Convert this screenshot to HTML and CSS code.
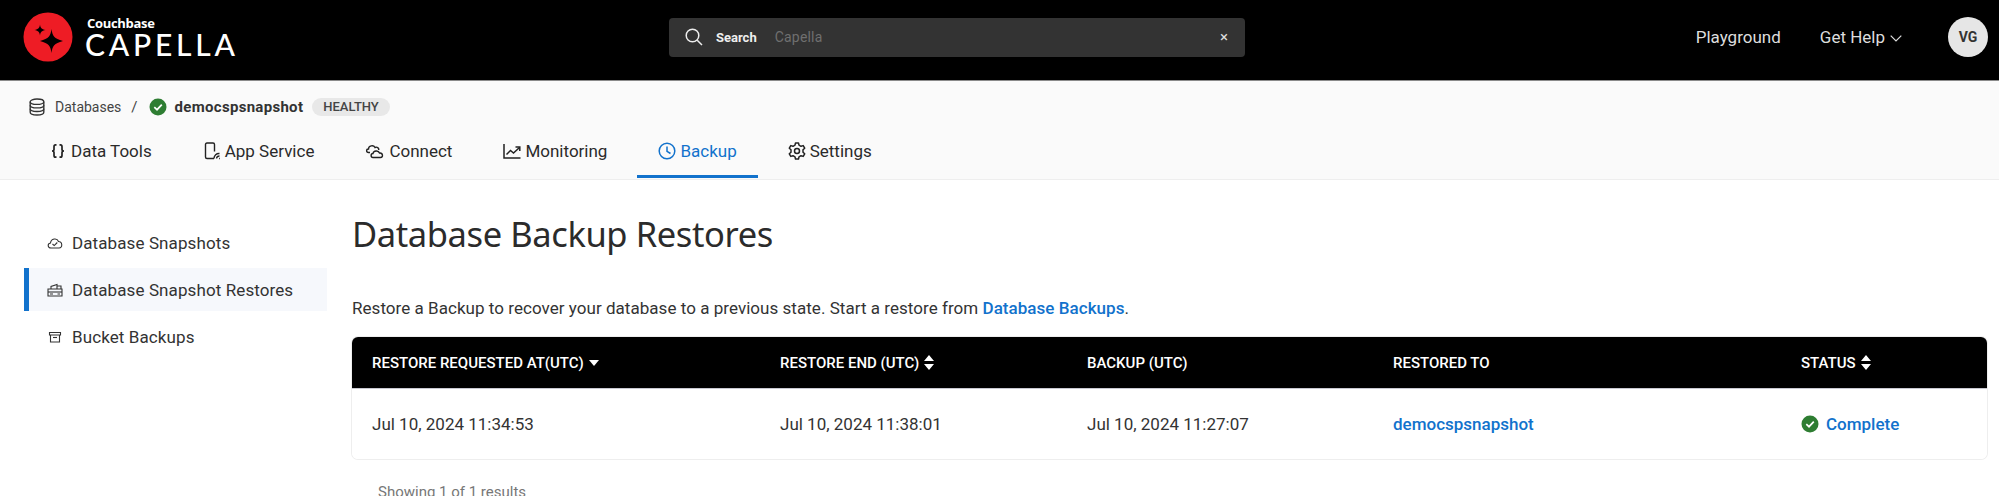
FILE: index.html
```html
<!DOCTYPE html>
<html lang="en">
<head>
<meta charset="utf-8">
<title>Database Backup Restores</title>
<link rel="stylesheet" href="styles.css">
</head>
<body>
<header class="topbar">
  <div class="brand">
    <svg class="brand-mark" viewBox="0 0 50 50" width="50" height="50">
      <circle cx="25" cy="25" r="24.5" fill="#ee1c25"/>
      <path d="M28.5 17 C29.5 24 31 26.5 40 29 C31 31.5 29.5 34 28.5 41 C27.5 34 26 31.5 17 29 C26 26.5 27.5 24 28.5 17Z" fill="#000"/>
      <path d="M17 12.5 C17.5 16 18.5 17.2 22.5 18 C18.5 18.8 17.5 20 17 23.5 C16.5 20 15.5 18.8 11.5 18 C15.5 17.2 16.5 16 17 12.5Z" fill="#000"/>
    </svg>
    <div class="brand-text">
      <span class="brand-small">Couchbase</span>
      <span class="brand-big">CAPELLA</span>
    </div>
  </div>
  <div class="search">
    <svg class="search-icon" viewBox="0 0 18 18" width="18" height="18" fill="none" stroke="#eee" stroke-width="1.5"><circle cx="7.5" cy="7.5" r="6.3"/><path d="M12.2 12.2 L17 17"/></svg>
    <span class="search-label">Search</span>
    <span class="search-scope">Capella</span>
    <span class="search-clear">×</span>
  </div>
  <nav class="topnav">
    <span class="topnav-item">Playground</span>
    <span class="topnav-item help">Get Help
      <svg viewBox="0 0 12 7" width="12" height="7" fill="none" stroke="#ddd" stroke-width="1.2"><path d="M.7.7 L6 6 L11.3.7"/></svg>
    </span>
    <span class="avatar">VG</span>
  </nav>
</header>

<section class="subheader">
  <div class="crumbs">
    <svg viewBox="0 0 16 18" width="16" height="18" fill="none" stroke="#333" stroke-width="1.4"><ellipse cx="8" cy="3.7" rx="6.8" ry="2.7"/><path d="M1.2 3.7 V14.3 C1.2 15.8 4.2 17 8 17 S14.8 15.8 14.8 14.3 V3.7"/><path d="M1.2 7.2 C1.2 8.7 4.2 9.9 8 9.9 S14.8 8.7 14.8 7.2"/><path d="M1.2 10.8 C1.2 12.3 4.2 13.5 8 13.5 S14.8 12.3 14.8 10.8"/></svg>
    <span class="crumb-link">Databases</span>
    <span class="crumb-sep">/</span>
    <svg class="check" viewBox="0 0 18 18" width="18" height="18"><circle cx="9" cy="9" r="8.5" fill="#2e7d32"/><path d="M5.3 9.2 L8 11.7 L12.8 6.6" fill="none" stroke="#fff" stroke-width="1.7"/></svg>
    <strong class="crumb-name">democspsnapshot</strong>
    <span class="badge">HEALTHY</span>
  </div>
  <nav class="tabs">
    <a class="tab"><svg viewBox="0 0 18 18" width="18" height="18" fill="none" stroke="#222" stroke-width="1.7"><path d="M7.500 2.800 H6.500 C5.300 2.800 5 3.600 5 4.800 V7.500 C5 8.500 4.300 9 3 9 C4.300 9 5 9.500 5 10.500 V13.200 C5 14.400 5.300 15.200 6.500 15.200 H7.500"/><path d="M10.500 2.800 H11.500 C12.700 2.800 13 3.600 13 4.800 V7.500 C13 8.500 13.700 9 15 9 C13.700 9 13 9.500 13 10.500 V13.200 C13 14.400 12.700 15.200 11.500 15.200 H10.500"/></svg>Data Tools</a>
    <a class="tab"><svg viewBox="0 0 18 18" width="18" height="18" fill="none" stroke="#222" stroke-width="1.4"><path d="M11 16.5 H4 C3 16.5 2.5 16 2.5 15 V2.5 C2.5 1.5 3 1 4 1 H10 C11 1 11.5 1.500 11.500 2.500 V9.500"/><path d="M11 16.500 A5 5 0 0 1 16.500 11.500 M13.500 16.500 A3 3 0 0 1 16.500 14 M16 16.500 H16.800"/></svg>App Service</a>
    <a class="tab"><svg viewBox="0 0 20 18" width="20" height="18" fill="none" stroke="#222" stroke-width="1.4"><path d="M5 10.500 H3.500 C1 10.500 1 7 3.500 7 C3.500 3.500 8.500 2.500 10 5.500 C12 4.500 14 6 13.800 8"/><path d="M8 15.500 C5.500 15.500 5.500 11.500 8 11.500 C8.500 8.500 13.500 8 14.500 11 C18 10.500 18.500 15.500 15.500 15.500 Z"/></svg>Connect</a>
    <a class="tab"><svg viewBox="0 0 18 18" width="18" height="18" fill="none" stroke="#222" stroke-width="1.5"><path d="M1 2 V16 H17.500"/><path d="M3.500 12.500 L7.500 8.500 L10.500 11 L16.500 5.500"/><path d="M12.500 5 H16.800 V9"/></svg>Monitoring</a>
    <a class="tab active"><svg viewBox="0 0 18 18" width="18" height="18" fill="none" stroke="#1272cc" stroke-width="1.5"><circle cx="9" cy="9" r="7.800"/><path d="M9 4.500 V9.300 L12.500 11.500"/></svg>Backup</a>
    <a class="tab"><svg viewBox="0 0 18 18" width="18" height="18" fill="none" stroke="#222" stroke-width="1.5"><path d="M7.500 1 H10.500 L11 3.200 L13 4.300 L15.200 3.600 L16.700 6.200 L15 7.800 V10.200 L16.700 11.800 L15.200 14.400 L13 13.700 L11 14.800 L10.500 17 H7.500 L7 14.800 L5 13.700 L2.800 14.400 L1.300 11.800 L3 10.200 V7.800 L1.300 6.200 L2.800 3.600 L5 4.300 L7 3.200 Z" stroke-linejoin="round"/><circle cx="9" cy="9" r="2.500"/></svg>Settings</a>
  </nav>
</section>

<main class="layout">
  <aside class="sidebar">
    <a class="side-item"><svg viewBox="0 0 16 14" width="16" height="14" fill="none" stroke="#333" stroke-width="1.1"><path d="M4 12 C.5 12 .2 7.500 3.500 7 C4 2.500 10 1.500 11.500 5.500 C15.500 5.500 16 12 12 12 Z"/><path d="M5.500 8 L7.200 9.600 L10.300 6.500"/></svg>Database Snapshots</a>
    <a class="side-item active"><svg viewBox="0 0 16 14" width="16" height="14" fill="none" stroke="#333" stroke-width="1.1"><path d="M1 6 H15 V13 H1 Z"/><path d="M1 9 H15"/><path d="M4 6 V3.500 L10 1.500 V6"/><path d="M10 3 H14 V6"/><path d="M3 11 H6 M10.500 11 H13"/></svg>Database Snapshot Restores</a>
    <a class="side-item"><svg viewBox="0 0 16 14" width="16" height="14" fill="none" stroke="#333" stroke-width="1.1"><path d="M2.500 2.500 H13.500 V5 H2.500 Z"/><path d="M3.500 5 V12 H12.500 V5"/><path d="M6 7.500 H10"/></svg>Bucket Backups</a>
  </aside>
  <div class="content">
    <h1 class="title">Database Backup Restores</h1>
    <p class="intro">Restore a Backup to recover your database to a previous state. Start a restore from <a class="link">Database Backups</a>.</p>
    <div class="table">
      <div class="thead">
        <div class="th">RESTORE REQUESTED AT(UTC) <svg class="sort" viewBox="0 0 10 6" width="10" height="6"><path d="M0 0 H10 L5 6Z" fill="#fff"/></svg></div>
        <div class="th">RESTORE END (UTC) <svg class="sort" viewBox="0 0 10 15" width="10" height="15"><path d="M0 6 H10 L5 0Z M0 9 H10 L5 15Z" fill="#fff"/></svg></div>
        <div class="th">BACKUP (UTC)</div>
        <div class="th">RESTORED TO</div>
        <div class="th">STATUS <svg class="sort" viewBox="0 0 10 15" width="10" height="15"><path d="M0 6 H10 L5 0Z M0 9 H10 L5 15Z" fill="#fff"/></svg></div>
      </div>
      <div class="tbody">
        <div class="td">Jul 10, 2024 11:34:53</div>
        <div class="td">Jul 10, 2024 11:38:01</div>
        <div class="td">Jul 10, 2024 11:27:07</div>
        <div class="td"><a class="link">democspsnapshot</a></div>
        <div class="td status"><svg viewBox="0 0 18 18" width="18" height="18"><circle cx="9" cy="9" r="8.500" fill="#2e7d32"/><path d="M5.300 9.200 L8 11.700 L12.800 6.600" fill="none" stroke="#fff" stroke-width="1.700"/></svg><a class="link">Complete</a></div>
      </div>
    </div>
    <p class="results">Showing 1 of 1 results</p>
  </div>
</main>
</body>
</html>
```
FILE: styles.css
```css
* { box-sizing: border-box; }
html, body { margin: 0; padding: 0; height: 496px; overflow: hidden; }
body { background: #fff; color: #222; font-family: Roboto, "Liberation Sans", sans-serif; width: 1999px; }
svg { display: block; flex: none; }

.topbar { height: 81px; background: #000; border-bottom: 1px solid #8a8a8a; display: flex; align-items: center; padding-right: 11px; }
.brand { width: 669px; padding-left: 23px; display: flex; align-items: center; height: 74px; flex: none; margin-top: -6px; }
.brand-text { display: flex; flex-direction: column; margin-left: 12px; color: #fff; }
.brand-small { font: 700 13px/13px "Open Sans", sans-serif; letter-spacing: -.3px; margin-left: 2px; }
.brand-big { font: 500 30px/26px Lato, sans-serif; letter-spacing: 3.8px; margin-top: 1px; }

.search { width: 576px; height: 39px; margin-top: -6px; background: #333; border-radius: 4px; display: flex; align-items: center; padding-left: 16px; color: #eee; }
.search-label { font-weight: 700; font-size: 13px; margin-left: 13px; }
.search-scope { font-size: 14px; color: #6f6f6f; margin-left: 18px; letter-spacing: .2px; }
.search-clear { margin-left: auto; margin-right: 17px; font-size: 15px; color: #ddd; }

.topnav { margin-left: auto; margin-top: -6px; display: flex; align-items: center; color: #ddd; font-size: 17px; }
.help { margin-left: 39px; display: flex; align-items: center; gap: 5px; }
.help svg { margin-top: 3px; }
.avatar { width: 40px; height: 40px; margin-left: 46px; border-radius: 50%; background: #e6e6e6; color: #333; font-weight: 700; font-size: 14px; display: flex; align-items: center; justify-content: center; }

.subheader { height: 99px; background: #fafafa; border-bottom: 1px solid #eee; }
.crumbs { height: 50px; padding: 1px 0 0 29px; display: flex; align-items: center; font-size: 14px; color: #444; }
.crumb-link { margin-left: 10px; }
.crumb-sep { margin: 0 0 0 10px; font-size: 15px; }
.check { margin-left: 11px; }
.crumb-name { margin-left: 8px; color: #333; font-size: 15px; letter-spacing: .3px; }
.badge { margin-left: 9px; height: 18px; padding: 0 11px; border-radius: 9px; background: #e8e8e8; font-size: 13px; font-weight: 500; line-height: 18px; }

.tabs { display: flex; gap: 9px; padding-left: 28px; height: 47px; }
.tab { display: flex; align-items: center; gap: 4px; padding: 0 21px 5px; font-size: 17px; color: #2a2a2a; border-bottom: 3px solid transparent; }
.tab.active { color: #1272cc; border-bottom-color: #1272cc; }

.layout { display: flex; }
.sidebar { width: 352px; flex: none; padding: 41px 0 0 24px; }
.side-item { display: flex; align-items: center; gap: 8px; width: 303px; height: 43px; margin-bottom: 4px; padding-left: 23px; font-size: 17px; letter-spacing: .1px; color: #333; border-left: 5px solid transparent; }
.side-item svg { margin-left: -5px; margin-right: 1px; }
.side-item.active { background: #f6f8fc; border-left-color: #1272cc; }

.content { width: 1635px; padding-top: 29px; }
.title { margin: 0; font: 400 34.500px/50px "Noto Sans", sans-serif; color: #2b2b2b; letter-spacing: -.4px; }
.intro { margin: 37px 0 0; font-size: 17px; line-height: 24px; letter-spacing: .04px; color: #333; }
.link { color: #1272cc; font-weight: 500; }
.table { margin-top: 17px; border-radius: 6px; overflow: hidden; box-shadow: 0 0 0 1px #eee; }
.thead, .tbody { display: grid; grid-template-columns: 408px 307px 306px 408px 1fr; align-items: center; padding-left: 20px; }
.thead { height: 52px; background: #000; color: #fff; border-bottom: 1px solid #c8c8d0; }
.tbody { height: 70px; background: #fff; font-size: 17px; color: #333; }
.th { font-size: 15px; font-weight: 500; display: flex; align-items: center; gap: 5px; }
.status { display: flex; align-items: center; gap: 7px; }
.results { margin: 24px 0 0 26px; font-size: 15px; color: #777; }
```
